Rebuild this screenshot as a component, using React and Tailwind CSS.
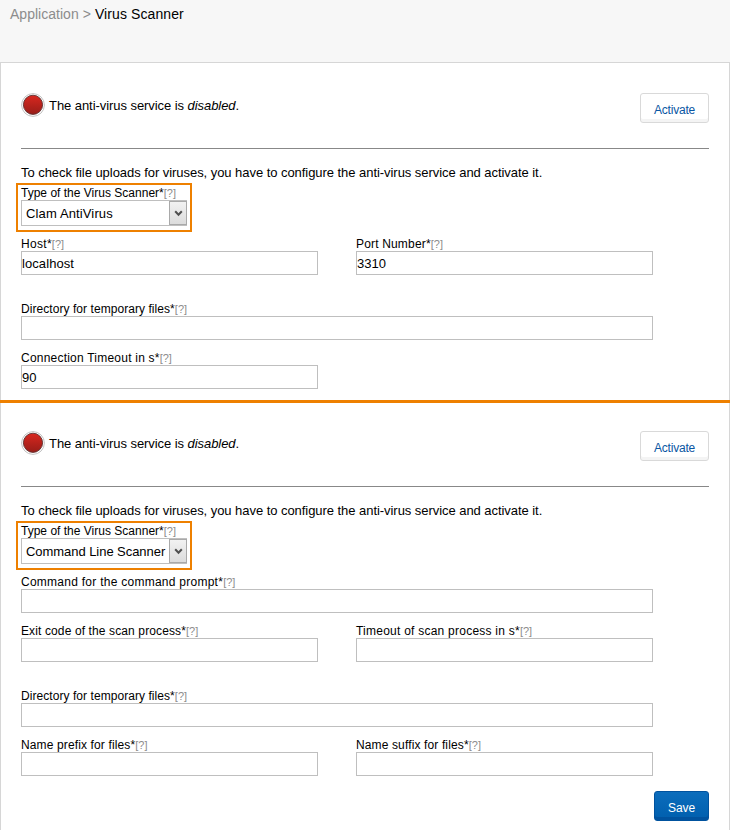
import React from "react";

function Label({ text, tracking }) {
  return (
    <div className="flex h-4 items-baseline whitespace-nowrap pt-px text-[12px] leading-4 text-black">
      <span className={tracking}>{text}*</span>
      <span className="text-[11px] text-[#8c8c8c]">[?]</span>
    </div>
  );
}

function Field({ label, tracking, value, valueTracking, wide }) {
  return (
    <div className={wide ? "w-[632px]" : "w-[297px]"}>
      <Label text={label} tracking={tracking} />
      <div className="h-6 border border-[#bfbfbf] bg-white text-[13px] leading-[23px] text-black">
        <span className={valueTracking}>{value}</span>
      </div>
    </div>
  );
}

function StatusLight() {
  return (
    <svg className="h-6 w-6" viewBox="0 0 24 24">
      <defs>
        <linearGradient id="light" x1="0" y1="0" x2="0" y2="1">
          <stop offset="0" stopColor="#d9271f" />
          <stop offset="1" stopColor="#981d18" />
        </linearGradient>
      </defs>
      <circle cx="12" cy="12" r="11.4" fill="#fff" stroke="#c2c2c2" strokeWidth="1" />
      <circle cx="12" cy="11.8" r="9.6" fill="url(#light)" stroke="#5d3030" strokeWidth="0.9" />
    </svg>
  );
}

function Scanner({ type, typeTracking }) {
  return (
    <>
      <div className="flex h-[30px] items-start justify-between">
        <div className="flex items-center">
          <StatusLight />
          <p className="ml-1 whitespace-nowrap pt-0.5 text-[13px] leading-[22px] tracking-[-0.06px]">
            The anti-virus service is <i>disabled</i>.
          </p>
        </div>
        <button className="h-[30px] w-[69px] rounded-[3px] border border-[#d9d9d9] bg-white pt-1 text-[12px] leading-4 tracking-[-0.22px] text-[#0a56a3] shadow-[inset_0_-3px_0_#f4f4f4]">
          Activate
        </button>
      </div>
      <div className="mt-[25px] h-px bg-[#888]" />
      <p className="mt-[15px] h-[19px] whitespace-nowrap text-[13px] leading-[18px] tracking-[-0.05px]">
        To check file uploads for viruses, you have to configure the anti-virus service and activate it.
      </p>
      <div className="-ml-[5px] h-[49px] w-[176px] border-2 border-[#ee8000] pl-[3px]">
        <div className="-mt-px">
          <Label text="Type of the Virus Scanner" tracking="tracking-[0.01px]" />
        </div>
        <div className="flex h-[26px] w-[166px] items-stretch justify-between border border-[#bfbfbf] bg-white pl-1 text-[13px] leading-[25px]">
          <span className={typeTracking}>{type}</span>
          <span className="-mr-px flex w-[18px] shrink-0 items-center justify-center border border-[#a9a9a9] bg-gradient-to-b from-[#f2f2f2] to-[#dcdcdc]">
            <svg className="h-[7px] w-[9px]" viewBox="0 0 9 7">
              <path d="M1.2 1.2 4.5 4.7 7.8 1.2" fill="none" stroke="#505050" strokeWidth="2" />
            </svg>
          </span>
        </div>
      </div>
    </>
  );
}

export default function App() {
  return (
    <div className="h-[830px] w-[730px] overflow-hidden bg-[#f7f7f7] font-['Liberation_Sans',Arial,sans-serif] text-black">
      <header className="flex h-[62px] gap-1 whitespace-pre pl-[10px] pt-[5px] text-[14px] leading-[18px]">
        <span className="tracking-[0.02px] text-[#8c8c8c]">Application</span>
        <span className="text-[#8c8c8c]">&gt;</span>
        <span className="tracking-[0.1px]">Virus Scanner</span>
      </header>
      <section className="h-[338px] border-x border-t border-[#d6d6d6] bg-white px-5 pt-[30px]">
        <Scanner type="Clam AntiVirus" typeTracking="whitespace-nowrap tracking-[0.13px]" />
        <div className="mt-[3px] flex gap-[38px]">
          <Field label="Host" tracking="tracking-[0.3px]" value="localhost" valueTracking="tracking-[0.08px]" />
          <Field label="Port Number" tracking="tracking-[0.17px]" value="3310" />
        </div>
        <div className="mt-[25px]">
          <Field wide label="Directory for temporary files" tracking="tracking-[0.06px]" />
        </div>
        <div className="mt-[9px]">
          <Field label="Connection Timeout in s" tracking="tracking-[0.22px]" value="90" />
        </div>
      </section>
      <div className="h-[3px] bg-[#ee8000]" />
      <section className="h-[427px] border-x border-[#d6d6d6] bg-white px-5 pt-[28px]">
        <Scanner type="Command Line Scanner" typeTracking="whitespace-nowrap tracking-[-0.05px]" />
        <div className="mt-[3px]">
          <Field wide label="Command for the command prompt" tracking="tracking-[0.26px]" />
        </div>
        <div className="mt-[9px] flex gap-[38px]">
          <Field label="Exit code of the scan process" tracking="tracking-[0.12px]" />
          <Field label="Timeout of scan process in s" tracking="tracking-[0.24px]" />
        </div>
        <div className="mt-[25px]">
          <Field wide label="Directory for temporary files" tracking="tracking-[0.06px]" />
        </div>
        <div className="mt-[9px] flex gap-[38px]">
          <Field label="Name prefix for files" tracking="tracking-[0.13px]" />
          <Field label="Name suffix for files" tracking="tracking-[0.13px]" />
        </div>
        <div className="mt-[15px] flex justify-end">
          <button className="h-[30px] w-[55px] rounded-[3px] border border-[#00529e] bg-gradient-to-b from-[#0c6dbc] to-[#005fae] pt-1 text-[12px] leading-4 tracking-[-0.1px] text-white shadow-[inset_0_-3px_0_#00529e]">
            Save
          </button>
        </div>
      </section>
    </div>
  );
}
